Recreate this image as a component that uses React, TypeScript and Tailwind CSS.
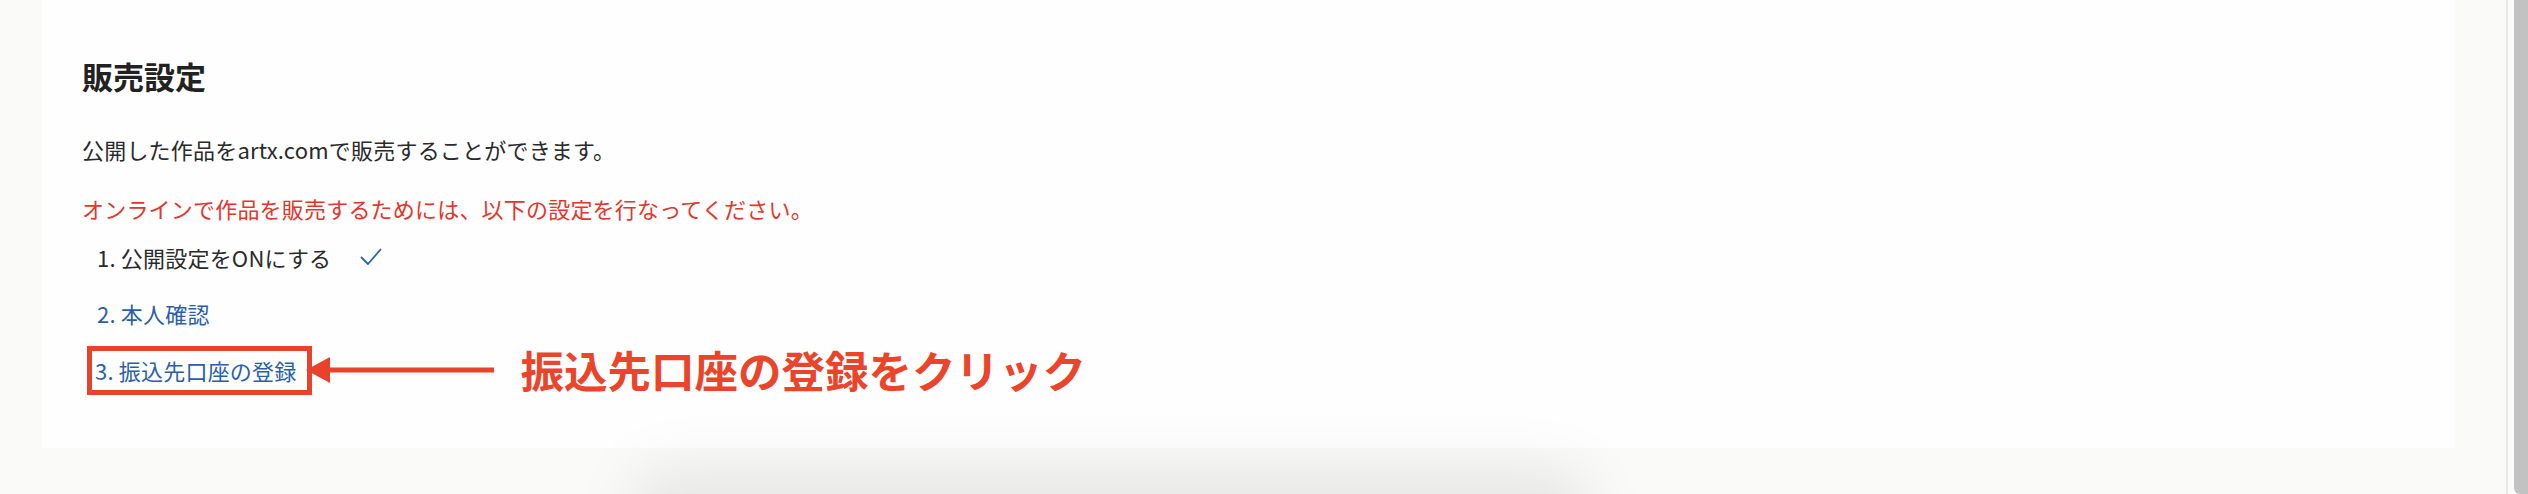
import React from "react";

const font = { fontFamily: '"Noto Sans CJK JP", "Noto Sans", sans-serif' };

function CheckMark() {
  return (
    <svg width="22" height="18" viewBox="0 0 22 18" className="ml-[29px]">
      <polyline
        points="1,9 8,16 21,1"
        fill="none"
        stroke="#2d62a8"
        strokeWidth="1.8"
        strokeLinejoin="round"
      />
    </svg>
  );
}

function Arrow() {
  return (
    <svg width="188" height="28" viewBox="0 0 188 28" className="-ml-[6px] shrink-0">
      <polygon points="0,14 24,1 24,27" fill="#e8432a" />
      <rect x="22" y="11.5" width="166" height="5" fill="#e8432a" />
    </svg>
  );
}

export default function App() {
  return (
    <div
      className="relative flex h-[494px] w-full overflow-hidden bg-[#fafaf9]"
      style={font}
    >
      <div className="flex-1 pl-[42px] pr-[51px]">
        <div className="h-[448px] bg-[#fefefe] pl-[40px] pt-[56px] tracking-[0.2px]">
          <h1 className="text-[31px] font-bold leading-[40px] tracking-normal text-[#222]">販売設定</h1>
          <p className="mt-[37px] text-[22px] leading-[32px] text-[#2a2a2a]">
            公開した作品をartx.comで販売することができます。
          </p>
          <p className="mt-[27px] text-[22px] leading-[32px] text-[#e5352a]">
            オンラインで作品を販売するためには、以下の設定を行なってください。
          </p>
          <ol className="pl-[15px] text-[22px] leading-[32px]">
            <li className="mt-[17px] flex items-center text-[#2a2a2a]">
              <span>1. 公開設定をONにする</span>
              <CheckMark />
            </li>
            <li className="mt-[24px] text-[#2b5ea8]">2. 本人確認</li>
            <li className="-ml-[10px] mt-[15px] flex items-center">
              <span className="flex h-[49px] items-center border-[5px] border-[#e8432a] pl-[3px] pr-[11px] text-[#2b5ea8]">
                3. 振込先口座の登録
              </span>
              <Arrow />
              <span className="ml-[26px] text-[43.5px] font-bold leading-[52px] tracking-normal text-[#ea452b]">
                振込先口座の登録をクリック
              </span>
            </li>
          </ol>
        </div>
      </div>
      <div className="flex h-full w-[22px]">
        <div className="w-[2px] bg-[#e6e6e6]" />
        <div className="w-[6px] bg-[#fbfbfb]" />
        <div className="flex-1 rounded-bl-[6px] bg-[#c2c2c2]" />
      </div>
      <div className="pointer-events-none absolute left-[630px] top-[468px] h-[90px] w-[960px] rounded-full bg-black/[0.08] blur-[28px]" />
    </div>
  );
}
